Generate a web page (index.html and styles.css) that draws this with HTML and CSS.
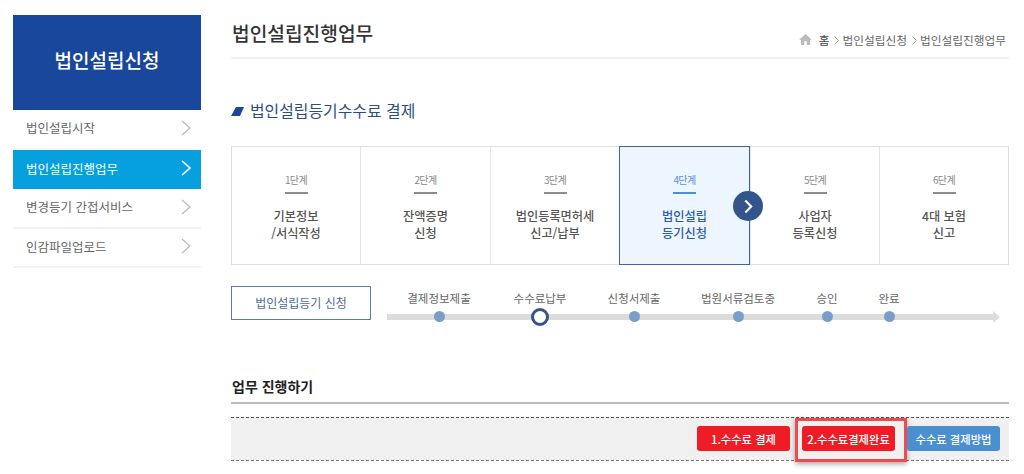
FILE: index.html
```html
<!DOCTYPE html>
<html lang="ko">
<head>
<meta charset="utf-8">
<title>법인설립진행업무</title>
<link rel="stylesheet" href="styles.css">
</head>
<body>
<div class="page">
  <aside class="side">
    <h2 class="side-head">법인설립신청</h2>
    <ul class="side-menu">
      <li class="side-item plain">법인설립시작<svg class="chev" viewBox="0 0 10 16"><path d="M1 1l8 7-8 7"/></svg></li>
      <li class="side-item active">법인설립진행업무<svg class="chev" viewBox="0 0 10 16"><path d="M1 1l8 7-8 7"/></svg></li>
      <li class="side-item">변경등기 간접서비스<svg class="chev" viewBox="0 0 10 16"><path d="M1 1l8 7-8 7"/></svg></li>
      <li class="side-item">인감파일업로드<svg class="chev" viewBox="0 0 10 16"><path d="M1 1l8 7-8 7"/></svg></li>
    </ul>
  </aside>
  <main class="main">
    <header class="top">
      <h1 class="title">법인설립진행업무</h1>
      <nav class="crumbs">
        <svg class="home" viewBox="0 0 14 12"><path d="M7 0L0 6.2h2V12h3.6V8h2.8v4H12V6.2h2z"/></svg>
        <span class="crumb-home">홈</span><svg class="sep" viewBox="0 0 5 9"><path d="M.5.5l4 4-4 4"/></svg><span>법인설립신청</span><svg class="sep" viewBox="0 0 5 9"><path d="M.5.5l4 4-4 4"/></svg><span>법인설립진행업무</span>
      </nav>
    </header>
    <h3 class="section"><svg class="mark" viewBox="0 0 13 9"><path d="M5 0h8L9 9H0z"/></svg>법인설립등기수수료 결제</h3>
    <ol class="steps">
      <li class="step"><span class="num">1단계</span><span class="name">기본정보<br>/서식작성</span></li>
      <li class="step"><span class="num">2단계</span><span class="name">잔액증명<br>신청</span></li>
      <li class="step"><span class="num">3단계</span><span class="name">법인등록면허세<br>신고/납부</span></li>
      <li class="step current"><span class="num">4단계</span><span class="name">법인설립<br>등기신청</span>
        <span class="next"><svg viewBox="0 0 10 14"><path d="M2 1.5L7.5 7 2 12.5"/></svg></span>
      </li>
      <li class="step"><span class="num">5단계</span><span class="name">사업자<br>등록신청</span></li>
      <li class="step"><span class="num">6단계</span><span class="name">4대 보험<br>신고</span></li>
    </ol>
    <section class="progress">
      <div class="stage">법인설립등기 신청</div>
      <div class="track">
        <div class="track-item"><span>결제정보제출</span><i class="dot"></i></div>
        <div class="track-item"><span>수수료납부</span><i class="dot now"></i></div>
        <div class="track-item"><span>신청서제출</span><i class="dot"></i></div>
        <div class="track-item"><span>법원서류검토중</span><i class="dot"></i></div>
        <div class="track-item"><span>승인</span><i class="dot"></i></div>
        <div class="track-item"><span>완료</span><i class="dot"></i></div>
      </div>
    </section>
    <h4 class="work">업무 진행하기</h4>
    <div class="actions">
      <button class="btn red">1.수수료 결제</button>
      <button class="btn red marked">2.수수료결제완료</button>
      <button class="btn blue">수수료 결제방법</button>
    </div>
  </main>
</div>
</body>
</html>
```
FILE: styles.css
```css
*, *::before, *::after { box-sizing: border-box; }
html, body { margin: 0; padding: 0; background: #fff; height: 474px; overflow: hidden; }
body { font-family: "Noto Sans CJK KR", "Noto Sans", sans-serif; color: #555; }
ul, ol { list-style: none; margin: 0; padding: 0; }
h1, h2, h3, h4 { margin: 0; }

.page { display: flex; padding: 15px 15px 0 13px; gap: 30px; align-items: flex-start; }

.side { width: 188px; flex: none; }
.side-head { height: 95px; background: #18479b; color: #fff; font-size: 19px; font-weight: 500; line-height: 89px; text-align: center; }
.side-item { height: 39.5px; padding: 0 10px 2px 13px; display: flex; align-items: center; justify-content: space-between; font-size: 12.5px; color: #666; border-bottom: 2px solid #f2f2f2; }
.side-item.plain { border-bottom: 0; padding-bottom: 4px; }
.side-item.active { background: #05a0dd; color: #fff; border-bottom: 0; padding-bottom: 2px; }
.chev { width: 10px; height: 16px; fill: none; stroke: #bbb; stroke-width: 1.3; }
.active .chev { stroke: #fff; stroke-width: 1.6; }

.main { width: 778px; flex: none; }
.top { height: 44px; display: flex; justify-content: space-between; align-items: flex-start; border-bottom: 2px solid #f1f1f1; }
.title { font-size: 19.2px; font-weight: 500; color: #333; line-height: 36px; padding-left: 1px; }
.crumbs { display: flex; align-items: center; font-size: 11.7px; color: #666; margin-top: 15px; padding-right: 3px; height: 18px; }
.home { width: 13px; height: 11px; fill: #bbb; margin-right: 7px; }
.crumb-home { color: #444; }
.sep { width: 5px; height: 9px; fill: none; stroke: #888; stroke-width: .8; margin: 2px 3px 0 5px; }

.section { display: flex; align-items: center; font-size: 15.9px; font-weight: 400; color: #2c4f83; margin-top: 40px; line-height: 24px; }
.mark { width: 13px; height: 9px; fill: #18479b; margin: 1px 6px 0 0; }

.steps { display: grid; grid-template-columns: 128px 130px 129px 131px 129px 1fr; margin-top: 23px; height: 119px; border: 1px solid #ddd; }
.step { position: relative; display: flex; flex-direction: column; align-items: center; border-left: 1px solid #e4e4e4; padding-top: 26px; text-align: center; }
.step:first-child { border-left: 0; }
.num { font-size: 10px; letter-spacing: -0.6px; color: #888; line-height: 14px; padding-bottom: 5px; width: 23px; border-bottom: 2px solid #8c8c8c; white-space: nowrap; display: flex; justify-content: center; }
.name { font-size: 12.2px; font-weight: 500; line-height: 17px; color: #555; margin-top: 14px; }
.current { background: #edf5fe; border: 1px solid #3f64a3; margin: -1px 0; z-index: 1; }
.current .num { color: #5b8fd0; border-bottom-color: #4a90d9; }
.current .name { color: #2d5da5; }
.next { position: absolute; right: -14px; top: 44px; width: 30px; height: 30px; border-radius: 50%; background: #34548c; display: flex; align-items: center; justify-content: center; z-index: 2; }
.next svg { width: 11px; height: 15px; fill: none; stroke: #fff; stroke-width: 2; }

.progress { display: flex; margin-top: 21px; gap: 16px; }
.stage { width: 140px; height: 34px; border: 1px solid #5c79ac; color: #4d6c9c; font-size: 12px; text-align: center; line-height: 32px; }
.track { position: relative; width: 613px; flex: none; display: grid; grid-template-columns: 104px 98px 90px 118px 60px 64px; height: 42px; }
.track::before { content: ""; position: absolute; left: 0; right: 7px; top: 28px; height: 6px; background: #dcdcdc; }
.track::after { content: ""; position: absolute; right: 0; top: 25px; border-left: 7px solid #dcdcdc; border-top: 6px solid transparent; border-bottom: 6px solid transparent; }
.track-item { position: relative; z-index: 1; display: flex; flex-direction: column; align-items: center; font-size: 11.5px; color: #666; white-space: nowrap; }
.track-item span { line-height: 16px; height: 25px; padding-top: 4px; }
.dot { display: block; width: 11px; height: 11px; border-radius: 50%; background: #789fcb; margin-top: 0; }
.dot.now { width: 18px; height: 18px; background: #fff; border: 3px solid #34548c; margin-top: -3px; }

.work { font-size: 14px; font-weight: 700; color: #222; margin-top: 46px; line-height: 24px; height: 30px; border-bottom: 2px solid #bbb; padding-left: 1px; }
.actions { margin-top: 13px; height: 44px; background: #f0f0f0; border-top: 1px dashed #555; border-bottom: 1px dashed #777; display: flex; justify-content: flex-end; align-items: center; gap: 12px; padding: 0 9px 0 0; }
.btn { position: relative; width: 93px; height: 25px; border: 0; border-radius: 3px; color: #fff; font: 500 11.3px "Noto Sans CJK KR", sans-serif; padding: 0; margin-top: -1px; }
.red { background: #ee1c25; }
.blue { background: #4a8fd0; }
.marked::after { content: ""; position: absolute; left: -7px; top: -8px; width: 112px; height: 44px; border: 3px solid #ee4b50; box-shadow: 0 2px 5px rgba(0,0,0,.35); pointer-events: none; }
```
